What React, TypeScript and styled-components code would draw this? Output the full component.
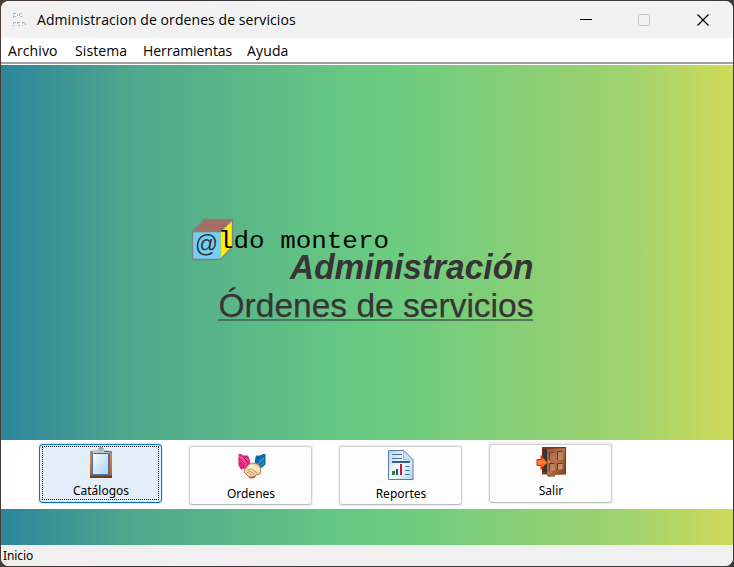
import React from 'react';
import styled, { createGlobalStyle, css } from 'styled-components';

const Global = createGlobalStyle`
  * { box-sizing: border-box; }
  body { margin: 0; overflow: hidden; background: #403d40; }
`;

const uiFont = '"Open Sans", "Noto Sans", sans-serif';
const gradient =
  'linear-gradient(90deg, #2e8499 0, #31889a 15px, #4fa88c 132px, #66c882 345px, #6acb80 390px, #9ad170 600px, #9fd36e 625px, #d0da58 732px)';

const Desktop = styled.div`
  width: 734px;
  height: 567px;
  padding: 1px;
  background: linear-gradient(90deg, #4a3c36 0, #35302f 120px, #403d45 300px, #3d3a3e 100%);
`;

const Window = styled.main`
  display: flex;
  flex-direction: column;
  width: 732px;
  height: 565px;
  overflow: hidden;
  border-radius: 8px;
  background: #fff;
  color: #000;
  font-family: ${uiFont};
`;

const TitleBar = styled.header`
  display: flex;
  align-items: center;
  height: 37px;
  padding-left: 10px;
  background: #f2f2f2;
`;

const Title = styled.h1`
  flex: 1;
  margin: 0 0 0 10px;
  font-size: 14px;
  font-weight: 400;
  line-height: 20px;
  letter-spacing: 0.08px;
  white-space: nowrap;
`;

const CaptionButton = styled.button`
  display: grid;
  place-items: center;
  width: 58px;
  height: 37px;
  padding: 0;
  border: 0;
  background: transparent;
  svg { display: block; }
  &:last-child { width: 59px; padding-left: 1px; margin-right: 1px; }
`;

const MenuBar = styled.nav`
  display: flex;
  align-items: center;
  height: 27px;
  padding: 0 0 1px 7px;
  background: linear-gradient(#fff 24px, #a0a0a0 24px, #a0a0a0 26px, #fff 26px);
`;

const MenuItem = styled.span<{ $width: number; $spacing: number }>`
  width: ${p => p.$width}px;
  font-size: 14px;
  line-height: 20px;
  letter-spacing: ${p => p.$spacing}px;
  white-space: nowrap;
`;

const Banner = styled.section`
  height: 375px;
  padding: 140px 0 0 187px;
  background: ${gradient};
  svg { display: block; }
`;

const Toolbar = styled.section`
  display: flex;
  gap: 25px;
  height: 69px;
  padding: 2px 0 0 37px;
  background: #fff;
`;

const ButtonFrame = styled.div<{ $lowered?: boolean }>`
  width: 125px;
  height: ${p => (p.$lowered ? 61 : 62)}px;
  margin-top: ${p => (p.$lowered ? 3 : 0)}px;
  padding: ${p => (p.$lowered ? 1 : 2)}px 1px 1px;
  background: #f0f0f0;
`;

const ToolButton = styled.button<{ $active?: boolean }>`
  display: flex;
  width: 123px;
  height: 59px;
  padding: 1px 2px 2px;
  border: 1px solid #d0d0d0;
  border-bottom-color: #bcbcbc;
  border-radius: 4px;
  background: #fdfdfd;
  font-family: "Noto Sans", sans-serif;
  color: #000;
  ${p => p.$active && css`
    border-color: #0078d4;
    border-bottom-color: #0067b8;
    background: #e2eff9;
  `}
`;

const ButtonContent = styled.span<{ $active?: boolean }>`
  display: flex;
  flex: 1;
  align-self: stretch;
  flex-direction: column;
  align-items: center;
  border: 1px dotted ${p => (p.$active ? '#111' : 'transparent')};
  svg { display: block; flex: none; }
`;

const Label = styled.span<{ $lowered?: boolean }>`
  margin: ${p => (p.$lowered ? 4 : 3)}px 0 0 1px;
  font-size: 12px;
  line-height: 17px;
`;

const LowerBand = styled.div`
  height: 36px;
  background: ${gradient};
`;

const StatusBar = styled.footer`
  height: 21px;
  padding-left: 2px;
  background: #f0f0f0;
  font: 12px/21px "Noto Sans", sans-serif;
  letter-spacing: -0.1px;
`;

const AppIcon = () => (
  <svg width="16" height="18" viewBox="0 0 16 18" fill="none" stroke="#b5b4cc" strokeWidth="1">
    <path d="M2.5 2v6M3 2.5h3M6.5 3v2M3 5.5h3M8.5 3v3M9 2.5h2M9 5.5h2" strokeDasharray="2 1" />
    <path d="M2.5 11v4M3 11.5h2M6.5 11v3M7 11.5h2M7 14.5h2M11.5 11v4M12 11.5h2M14.5 12v3" strokeDasharray="2 1" />
  </svg>
);

const Logo = () => (
  <svg width="370" height="130" viewBox="188 205 370 130">
    <path d="M192.5 231.5 204.5 219.5H232.5L220.5 231.5Z" fill="#a46f62" />
    <path d="M220.5 231.5 232.5 219.5V247.5L220.5 259.5Z" fill="#fff000" />
    <path d="M192.5 231.5h28v28h-28z" fill="#73cff3" />
    <path d="M192.5 231.5 204.5 219.5H232.5V246.5L220.5 259.5H192.5ZM192.5 231.5H220.5L232.5 219.5" fill="none" stroke="#817f80" strokeWidth="1.4" />
    <text x="195" y="251.5" textLength="23" lengthAdjust="spacingAndGlyphs" fontFamily='"Liberation Sans", sans-serif' fontSize="23" fill="#373435">@</text>
    <text x="218" y="247.5" textLength="171" lengthAdjust="spacingAndGlyphs" fontFamily='"Liberation Mono", monospace' fontSize="24" fill="#050505">ldo montero</text>
    <text x="290" y="278.5" textLength="243.5" lengthAdjust="spacingAndGlyphs" fontFamily='"Liberation Sans", sans-serif' fontSize="34.5" fontWeight="700" fontStyle="italic" fill="#373435">Administración</text>
    <text x="218.5" y="316.5" textLength="315" lengthAdjust="spacingAndGlyphs" fontFamily='"Liberation Sans", sans-serif' fontSize="34" fill="#373435" stroke="#373435" strokeWidth=".25">Órdenes de servicios</text>
    <path d="M218 320H533" stroke="#435e50" strokeWidth="1.6" />
  </svg>
);

const Clipboard = () => (
  <svg width="32" height="32" viewBox="0 0 32 32">
    <defs>
      <linearGradient id="wood" x2="0" y2="1"><stop stopColor="#dc8d43" /><stop offset=".82" stopColor="#bd6421" /><stop offset="1" stopColor="#854009" /></linearGradient>
      <linearGradient id="sheet" x2="1" y2="1"><stop stopColor="#f7fbfe" /><stop offset="1" stopColor="#acd1ef" /></linearGradient>
    </defs>
    <path d="M5 4h22v27H5z" fill="url(#wood)" /><path d="M7 6h18v22H7z" fill="#4c70a7" /><path d="M8 7h15v20H8z" fill="url(#sheet)" />
    <path d="M5 4h22v3H5z" fill="#85898c" /><path d="M8 3h16v3H8z" fill="#c4c9ca" /><path d="M14 3V1h4v2M16 0v4" stroke="#85898c" fill="none" />
    <path d="M9 6.5h14M19 4.5h5" stroke="#596064" /><path d="M5 29h22v2H5z" fill="#75400f" />
  </svg>
);

const Handshake = () => (
  <svg width="32" height="32" viewBox="0 0 32 32">
    <path d="M3.5 5H6l2 1.5h5l2 5v3l-5 5-4 1-2.5-4Z" fill="#dc207d" />
    <path d="M4 6l5 3 3 5-1 3-6-5ZM9 8l4 2 1 3-3-2Z" fill="#fa4b9b" /><path d="M4 9l6 6M9 8l3 5" stroke="#a91867" fill="none" />
    <path d="M30.5 5H28l-3 1.5h-4l-1 4v3l5 6 2-1 3.5-3Z" fill="#086da8" />
    <path d="M29 7l-5 3-3 3 3 2 5-4ZM29 12l-4 4 1 1 3-2Z" fill="#2c8fc7" /><path d="M29 7l-6 5-1 2M24 8l-3 3" stroke="#0a4f8b" fill="none" />
    <path d="m10 20 4-5 4-1 5 1 3 4-1 6-4 1-2 3h-4l-6-6Z" fill="#f1d0a4" stroke="#ad7447" strokeWidth=".9" />
    <path d="m12 19 3-3h4l6 4-1 3-5-2-3 1Z" fill="#ffebc6" /><path d="m13 21 4-1 5 4M12 24l3-2 4 3M15 26l2-1" stroke="#bc8654" strokeWidth=".8" fill="none" />
    <path d="m13 27 2 2h4l2-3-4 2Z" fill="#9b6536" />
  </svg>
);

const Report = () => (
  <svg width="32" height="32" viewBox="0 0 32 32">
    <defs><linearGradient id="page" x2="1" y2="1"><stop stopColor="#afd0ed" /><stop offset=".5" stopColor="#f6fcff" /><stop offset="1" stopColor="#b0d5ee" /></linearGradient></defs>
    <path d="M3.5 1.5H19l9 9v20H3.5Z" fill="url(#page)" stroke="#5b7baa" />
    <path d="M18.5 1.5 28 11H18.5Z" fill="#c7e0f5" stroke="#88aacf" strokeWidth=".7" />
    <path d="M7 5.5h10M7 9.5h10" stroke="#50749f" /><path d="M7 13h18" stroke="#315f93" strokeWidth="2" />
    <path d="M20 17.5h5M20 21.5h5M20 25.5h5" stroke="#587ca9" />
    <path d="M7 22h3v4H7z" fill="#248b24" /><path d="M11 20h2v6h-2z" fill="#2457a9" /><path d="M15 15h2v11h-2z" fill="#c41e2e" />
  </svg>
);

const ExitDoor = () => (
  <svg width="32" height="32" viewBox="0 0 32 32">
    <defs>
      <linearGradient id="door" x2="1" y2="1"><stop stopColor="#9d5737" /><stop offset=".5" stopColor="#b87047" /><stop offset="1" stopColor="#7b3e1a" /></linearGradient>
      <linearGradient id="pane" x2="1" y2="1"><stop stopColor="#a56a4d" /><stop offset="1" stopColor="#d29b78" /></linearGradient>
      <linearGradient id="arrow" x2="0" y2="1"><stop stopColor="#ff2500" /><stop offset=".5" stopColor="#ff8b39" /><stop offset="1" stopColor="#ed2600" /></linearGradient>
    </defs>
    <path d="M7 0h24v27.5H7z" fill="#713919" /><path d="M8 2h10v23H8z" fill="#303638" /><path d="M12 2 30 1v26l-18 2Z" fill="url(#door)" />
    <path d="M15 6l5-1v8h-5zM22.5 5h5v8h-5zM15 17h5v6l-5 1zM22.5 17h5v5l-5 1z" fill="url(#pane)" />
    <path d="M14.5 13.5V5.5l5-.5M22.5 13V4.5h5M14.5 24v-7.5h5M22.5 23v-6.5h5" fill="none" stroke="#70391f" /><circle cx="14" cy="14.5" r="1" fill="#eab17c" />
    <path d="M2 12.5h4v-4l6 7-6 7v-4H2Z" fill="url(#arrow)" stroke="#e82b00" /><path d="M13 28.5h7v1h-7z" fill="#3f1e12" />
  </svg>
);

const tools = [
  { label: 'Catálogos', icon: Clipboard, active: true },
  { label: 'Ordenes', icon: Handshake, lowered: true },
  { label: 'Reportes', icon: Report, lowered: true },
  { label: 'Salir', icon: ExitDoor },
];

export default function App() {
  return (
    <>
      <Global />
      <Desktop>
        <Window>
          <TitleBar>
            <AppIcon />
            <Title>Administracion de ordenes de servicios</Title>
            <CaptionButton aria-label="Minimizar"><svg width="12" height="12"><path d="M0 5.5h12" stroke="#000" /></svg></CaptionButton>
            <CaptionButton aria-label="Maximizar" disabled><svg width="12" height="12"><rect x=".5" y=".5" width="11" height="11" rx=".7" fill="none" stroke="#c1c1c1" /></svg></CaptionButton>
            <CaptionButton aria-label="Cerrar"><svg width="12" height="12"><path d="m.5.5 11 11m0-11-11 11" stroke="#000" strokeWidth="1.2" /></svg></CaptionButton>
          </TitleBar>
          <MenuBar>
            <MenuItem $width={67} $spacing={0.1}>Archivo</MenuItem>
            <MenuItem $width={68} $spacing={0.1}>Sistema</MenuItem>
            <MenuItem $width={104} $spacing={-0.05}>Herramientas</MenuItem>
            <MenuItem $width={50} $spacing={0.15}>Ayuda</MenuItem>
          </MenuBar>
          <Banner><Logo /></Banner>
          <Toolbar>
            {tools.map(({ label, icon: Icon, active, lowered }) => (
              <ButtonFrame key={label} $lowered={lowered}>
                <ToolButton $active={active}>
                  <ButtonContent $active={active}><Icon /><Label $lowered={lowered}>{label}</Label></ButtonContent>
                </ToolButton>
              </ButtonFrame>
            ))}
          </Toolbar>
          <LowerBand />
          <StatusBar>Inicio</StatusBar>
        </Window>
      </Desktop>
    </>
  );
}
